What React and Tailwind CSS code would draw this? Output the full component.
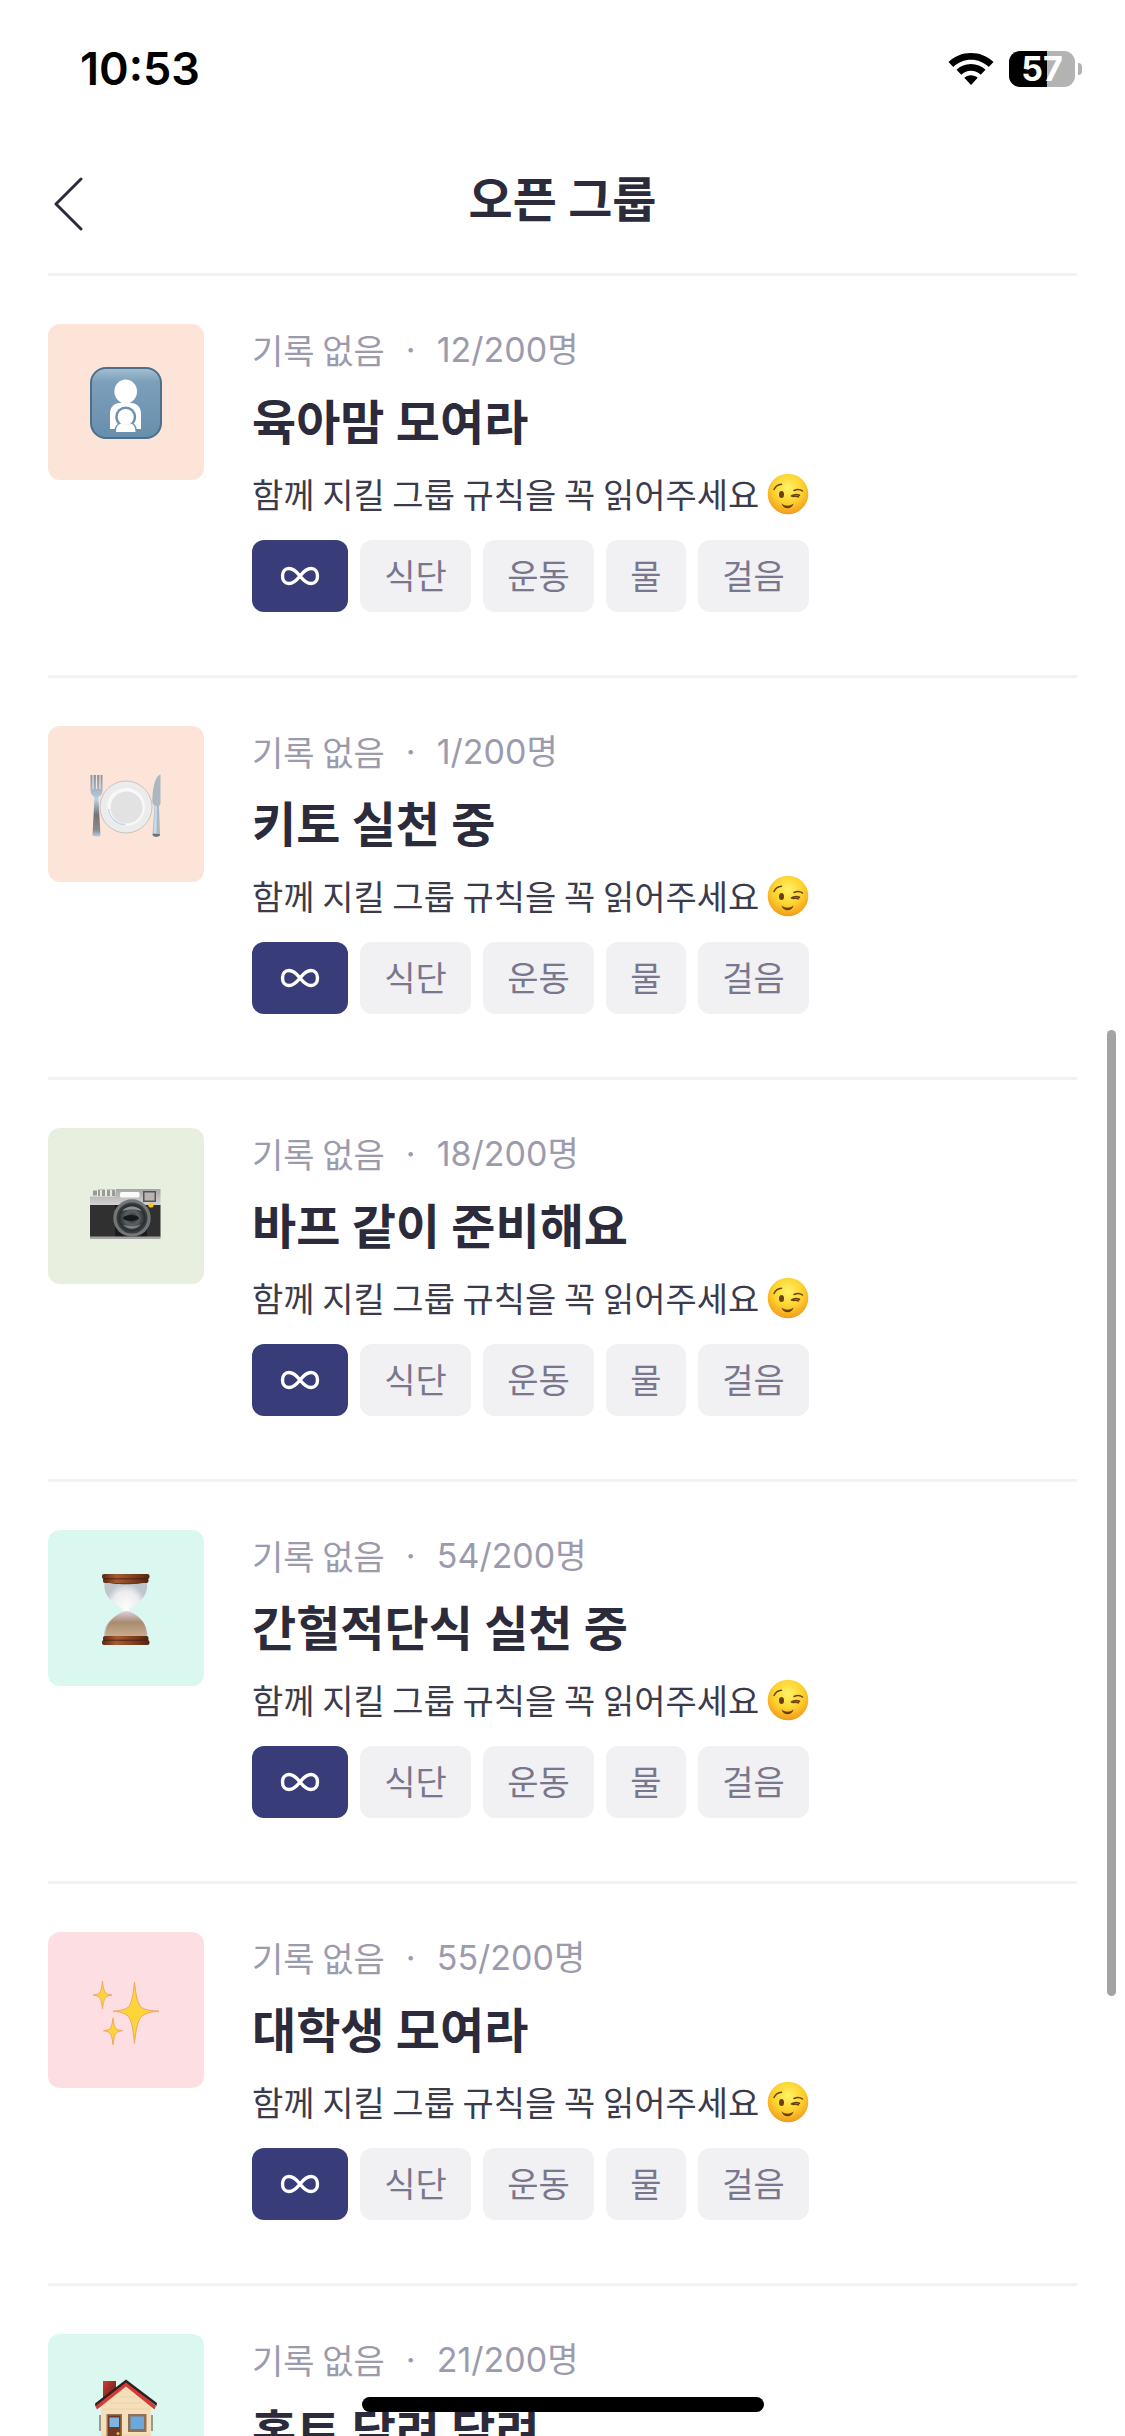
import React from 'react';

// Group artwork, each drawn on a 72x72 board
const NursingIcon = () => (
  <svg viewBox="0 0 72 72" className="w-[72px] h-[72px]" aria-hidden="true">
    <defs>
      <linearGradient id="nursing-bg" x1="0" y1="0" x2="0" y2="1">
        <stop offset="0" stopColor="#a3c0d4" />
        <stop offset="0.2" stopColor="#7d9fba" />
        <stop offset="1" stopColor="#668fad" />
      </linearGradient>
    </defs>
    <rect x="1" y="1" width="70" height="70" rx="15" fill="url(#nursing-bg)" stroke="#4d6f8a" strokeWidth="2" />
    <ellipse cx="35.7" cy="24.5" rx="11.3" ry="12" fill="#fff" />
    <path d="M20 62V47c0-7 4-11 10-11h11c6 0 10 4 10 11v15h-6c-1-3-3-5-5-6H31c-3 1-4 3-5 6z" fill="#fff" />
    <circle cx="35.7" cy="50" r="10.500" fill="#6b92b0" />
    <path d="M24 66c0-6 3-10 7-10h10c4 0 6 4 6 10z" fill="#6b92b0" />
    <circle cx="35.7" cy="50" r="8" fill="#fff" />
    <path d="M26 65c0-5 2-8 5.500-8.500 3 1.500 5.500 1.500 8.500 0 3.500.5 5.500 3.500 5.500 8.500z" fill="#fff" />
  </svg>
);

const PlateIcon = () => (
  <svg viewBox="0 0 72 72" className="w-[72px] h-[72px]" aria-hidden="true">
    <defs>
      <linearGradient id="plate-metal" x1="0" y1="0" x2="0" y2="1">
        <stop offset="0" stopColor="#8d8f94" />
        <stop offset="0.4" stopColor="#b5d0e6" />
        <stop offset="0.65" stopColor="#77726f" />
        <stop offset="0.9" stopColor="#8b8d92" />
        <stop offset="1" stopColor="#b8cfe4" />
      </linearGradient>
    </defs>
    <path d="M0.500 6v15c0 4 2 6 4 7L2.500 66c0 2 8 2 8 0L8.300 28c2.500-1 4.200-3 4.200-7V6" fill="url(#plate-metal)" />
    <path d="M3 6v14M6.500 6v14M10 6v14" stroke="#f4e4da" strokeWidth="1.200" />
    <circle cx="36" cy="38" r="26" fill="#ececec" stroke="#bdb9b7" strokeWidth="0.800" />
    <circle cx="36" cy="38" r="19" fill="#f8f8f8" />
    <circle cx="36.500" cy="38.500" r="16" fill="#e2e2e3" />
    <path d="M18.500 40c1 9 8 15.500 17 15.800" fill="none" stroke="#c5d8e8" strokeWidth="1.500" />
    <path d="M70.500 5.500c-6 2-8.500 16-8 29l2 2L62.500 66c0 2.500 7.500 2.500 7.500 0L69 37l1.500-2z" fill="#aab8c0" />
    <path d="M65 37l-1.500 27h3L67 37z" fill="#c5dbee" />
    <path d="M62.500 65h7.500c.5 3.500-7.500 3.500-7.500 0z" fill="#6f7176" />
  </svg>
);

const CameraIcon = () => (
  <svg viewBox="0 0 72 72" className="w-[72px] h-[72px]" aria-hidden="true">
    <defs>
      <linearGradient id="camera-top" x1="0" y1="0" x2="0" y2="1">
        <stop offset="0" stopColor="#a5a5a5" />
        <stop offset="1" stopColor="#d6d6d6" />
      </linearGradient>
      <radialGradient id="camera-lens">
        <stop offset="0" stopColor="#222" />
        <stop offset="0.5" stopColor="#5b6063" />
        <stop offset="1" stopColor="#24282a" />
      </radialGradient>
    </defs>
    <path d="M3 19.500h4v5H3zM8 18.500h7v6.500H8zM17 18.500h8v6.500h-8z" fill="#999b99" />
    <path d="M10 19h2v6h-2zM20 19h2v6h-2z" fill="#e6e6e6" />
    <path d="M0 25.500h25l1-7.500h44.500v17H0z" fill="url(#camera-top)" />
    <rect x="0" y="34" width="70.500" height="32" fill="#303030" />
    <rect x="25" y="34" width="32" height="32" fill="#1b1b1b" />
    <rect x="0" y="65.500" width="70.500" height="2.500" fill="#a5a5a5" />
    <rect x="30" y="21" width="19.500" height="5.500" rx="1.500" fill="#fafafa" />
    <rect x="53" y="20" width="13" height="11" fill="#555" />
    <rect x="54.500" y="21.500" width="10" height="8" fill="#b9b4b2" />
    <circle cx="42" cy="47" r="18.700" fill="#737577" />
    <circle cx="42" cy="47" r="15.500" fill="#3a3d3f" />
    <circle cx="42" cy="47" r="13.500" fill="url(#camera-lens)" />
    <path d="M32 40c5-6 15-6 20 0-6-2-14-2-20 0z" fill="#8c9294" />
    <path d="M33 54c5 5 13 5 18-.5-6 2-12 2-18 .5z" fill="#7d8385" />
    <ellipse cx="41" cy="47" rx="8" ry="3" fill="#16191a" />
    <circle cx="61" cy="34" r="2.600" fill="#fcc419" />
  </svg>
);

const HourglassIcon = () => (
  <svg viewBox="0 0 72 72" className="w-[72px] h-[72px]" aria-hidden="true">
    <defs>
      <linearGradient id="hourglass-wood" x1="0" y1="0" x2="1" y2="0">
        <stop offset="0" stopColor="#5a2a14" />
        <stop offset="0.3" stopColor="#a75a32" />
        <stop offset="0.7" stopColor="#7d3c1e" />
        <stop offset="1" stopColor="#54240f" />
      </linearGradient>
      <radialGradient id="hourglass-glass">
        <stop offset="0" stopColor="#ffffff" />
        <stop offset="0.7" stopColor="#ecebee" />
        <stop offset="1" stopColor="#bfc5cc" />
      </radialGradient>
      <linearGradient id="hourglass-sand" x1="0" y1="0" x2="0" y2="1">
        <stop offset="0" stopColor="#ddd3dc" />
        <stop offset="0.45" stopColor="#a98a70" />
        <stop offset="1" stopColor="#c9ad8e" />
      </linearGradient>
    </defs>
    <path d="M14.500 10h42.500c1.500 13-8 20-18 26v2c10 4 19 13 18.500 26H14C13.500 51 23 42 33 38v-2c-10-6-20-13-18.500-26z" fill="url(#hourglass-glass)" />
    <path d="M32 39c3-1.500 6-1.500 9 0 10 5 16 12 15.500 24.500h-41C15 51 22 44 32 39z" fill="url(#hourglass-sand)" />
    <path d="M16 9h40c-4 3-36 3-40 0z" fill="#4a4348" />
    <rect x="12" y="1" width="47.500" height="5" rx="2" fill="url(#hourglass-wood)" />
    <rect x="13" y="5" width="45.500" height="5" rx="2" fill="url(#hourglass-wood)" />
    <rect x="13" y="63" width="45.500" height="5" rx="2" fill="url(#hourglass-wood)" />
    <rect x="12" y="67" width="47.500" height="5" rx="2" fill="url(#hourglass-wood)" />
    <path d="M13 5.800h45M13 67.200h45" stroke="#401b0a" strokeWidth="0.800" />
  </svg>
);

const SparklesIcon = () => (
  <svg viewBox="0 0 72 72" className="w-[72px] h-[72px]" aria-hidden="true">
    <g fill="#fcd53a" stroke="#f0a85c" strokeWidth="1" strokeLinejoin="round">
      <path d="M44.500 7c1.500 14 3 22 7 25.500 4 2.500 10 3.200 17.500 3.700-8 .5-13 2-17 4.800-4 4-6 12-7.500 27.500-1.500-15.500-3-23.500-6.500-27.500-4-3-8-4.300-15-4.800 7-.5 11-1.200 15-3.700 3.500-3.500 5-11.500 6.500-25.500z" />
      <path d="M12.500 6c.8 8 2 11.500 3.500 12.500s3.500 1.200 6 1.500c-2.500.4-4.500.9-6 2-1.500 1.200-2.700 5-3.500 12-.8-7-2-10.800-3.500-12-1.500-1.100-3.500-1.600-6-2 2.500-.3 4.500-.5 6-1.500S11.700 14 12.500 6z" />
      <path d="M23 43c.8 7 2 10 3.500 11s3.500 1.400 6 1.700c-2.500.4-4.500.9-6 2-1.500 1.200-2.700 5-3.500 12-.8-7-2-10.800-3.500-12-1.500-1.100-3.500-1.600-6-2 2.500-.3 4.500-.7 6-1.700s2.700-4 3.500-11z" />
    </g>
  </svg>
);

const HouseIcon = () => (
  <svg viewBox="0 0 72 72" className="w-[72px] h-[72px]" aria-hidden="true">
    <defs>
      <linearGradient id="house-chimney" x1="0" y1="0" x2="1" y2="1">
        <stop offset="0" stopColor="#cf3d35" />
        <stop offset="1" stopColor="#5a1512" />
      </linearGradient>
    </defs>
    <path d="M13 4h13v20H13z" fill="url(#house-chimney)" />
    <path d="M9 38h3v16H9zM60 38h3v16h-3z" fill="#9a9a8c" />
    <path d="M36 7l25 22v43H11V29z" fill="#f5dfbb" />
    <path d="M26 20h20M20 26h32M12 32h48M12 58h48M12 64h48" stroke="#e8cda2" strokeWidth="0.800" />
    <path d="M36 4l30 25-1.500 3.500L36 9.500 7 32.500 5 28.500z" fill="#d63a36" />
    <path d="M36 2.500L67 26l-.5 3L36 5.500 5.500 29 5 26.500z" fill="#2b2022" />
    <rect x="16.500" y="37" width="15.500" height="35" fill="#96724f" />
    <rect x="18" y="38.500" width="12.500" height="34" fill="#6f3a25" />
    <rect x="19.500" y="40.500" width="9.500" height="9.500" fill="#7fb4e3" />
    <circle cx="28" cy="56.500" r="1.500" fill="#f0b93a" />
    <rect x="38" y="37" width="18.500" height="18" fill="#8f6f55" />
    <rect x="40.500" y="39.500" width="13.500" height="12.500" fill="#69a7dd" />
    <path d="M8 70h56v2H8z" fill="#5a8f3d" />
  </svg>
);

const WinkIcon = () => (
  <svg viewBox="0 0 42 42" className="w-[42px] h-[42px] shrink-0" role="img" aria-label="윙크">
    <defs>
      <radialGradient id="wink-face" cx="0.5" cy="0.35" r="0.65">
        <stop offset="0" stopColor="#fff266" />
        <stop offset="0.55" stopColor="#fdd32f" />
        <stop offset="1" stopColor="#f39a1c" />
      </radialGradient>
    </defs>
    <circle cx="21" cy="21" r="20.300" fill="url(#wink-face)" />
    <ellipse cx="14.500" cy="21.500" rx="2.500" ry="3.600" fill="#68400d" />
    <g fill="none" stroke="#68400d" strokeLinecap="round">
      <path d="M7 16.500c1.500-3 4-5 7.500-5.200" strokeWidth="1.500" />
      <path d="M27 17.500c3-1.500 6-1.500 8.500.5" strokeWidth="1.500" />
      <path d="M24.500 23c2-1.500 5-2 8-.8M26 23.500c2-.3 4-.2 5.500.2" strokeWidth="1.600" />
    </g>
    <path d="M14.500 30.500c4 3 8 3 12 0-1 6-10.500 6.500-12 0z" fill="#68400d" />
  </svg>
);

const InfinityIcon = () => (
  <svg viewBox="0 0 40 20" className="w-10 h-5" fill="none" stroke="#fff" strokeWidth="3.400" role="img" aria-label="무제한">
    <path d="M20 10c-3.500-4.500-6.500-7.500-11-7.500C5 2.500 2.500 5.500 2.500 10S5 17.500 9 17.500c4.500 0 7.500-3 11-7.500s6.500-7.500 11-7.500c4 0 6.500 3 6.500 7.500S35 17.500 31 17.500c-4.500 0-7.500-3-11-7.500z" />
  </svg>
);

const groups = [
  { id: 1, name: '육아맘 모여라', members: '12/200', color: 'bg-[#fce4d8]', icon: NursingIcon },
  { id: 2, name: '키토 실천 중', members: '1/200', color: 'bg-[#fce4d8]', icon: PlateIcon },
  { id: 3, name: '바프 같이 준비해요', members: '18/200', color: 'bg-[#e9efde]', icon: CameraIcon },
  { id: 4, name: '간헐적단식 실천 중', members: '54/200', color: 'bg-[#daf8ef]', icon: HourglassIcon },
  { id: 5, name: '대학생 모여라', members: '55/200', color: 'bg-[#fddfe3]', icon: SparklesIcon },
  { id: 6, name: '홈트 달려 달려', members: '21/200', color: 'bg-[#daf8ef]', icon: HouseIcon },
];

const tags = [
  { label: '식단', width: 'w-[111px]' },
  { label: '운동', width: 'w-[111px]' },
  { label: '물', width: 'w-20' },
  { label: '걸음', width: 'w-[111px]' },
];

const StatusBar = () => (
  <div className="h-[138px] shrink-0 flex items-center justify-between pl-20 pr-[43px] text-black">
    <span className="text-[45px] leading-[48px] font-semibold">10:53</span>
    <div className="flex items-center gap-[15px]">
      <svg viewBox="0 0 46 34" className="w-[46px] h-[34px]" aria-label="Wi-Fi" role="img">
        <path d="M23 1c8.800 0 16.800 3.400 22.500 9l-4.800 5C36 10.500 29.800 7.800 23 7.800S10 10.500 5.300 15L.5 10C6.200 4.400 14.200 1 23 1z" />
        <path d="M23 12c5.600 0 10.700 2.200 14.500 5.800l-4.800 5C30 20.300 26.700 18.800 23 18.800s-7 1.500-9.700 4l-4.800-5C12.300 14.200 17.400 12 23 12z" />
        <path d="M23 23.200c2.600 0 5 .9 6.700 2.500L23 33l-6.700-7.300c1.700-1.600 4.100-2.500 6.700-2.500z" />
      </svg>
      <div className="flex items-center gap-[3px]">
        <div className="w-[66px] h-9 rounded-[11px] flex items-center justify-center bg-linear-to-r from-black from-57% to-[#b3b3b3] to-57% text-white text-[34px] leading-9 font-bold">
          57
        </div>
        <div className="w-1 h-3 rounded-r-full bg-[#b3b3b3]" />
      </div>
    </div>
  </div>
);

const GroupRow = ({ group }) => (
  <li className="flex gap-12 border-t-3 border-[#f2f2f3] pt-12 pb-[63px]">
    <div className={`w-[156px] h-[156px] pt-0.5 shrink-0 rounded-xl flex items-center justify-center ${group.color}`}>
      <group.icon />
    </div>
    <div className="min-w-0">
      <p className="flex items-center h-[52px] text-[34px] leading-[52px] text-[#9c9bad]">
        <span className="font-['Noto_Sans_CJK_KR',sans-serif]">기록 없음</span>
        <span className="w-[52px] text-center">·</span>
        <span>{group.members}명</span>
      </p>
      <h2 className="mt-[11px] text-[48px] leading-[72px] font-bold text-[#2c2b3b]">{group.name}</h2>
      <p className="mt-[11px] flex items-center gap-2 text-[34px] leading-[48px] text-[#3c3b4c] font-['Noto_Sans_CJK_KR',sans-serif]">
        함께 지킬 그룹 규칙을 꼭 읽어주세요
        <WinkIcon />
      </p>
      <ul className="mt-[22px] flex gap-3">
        <li className="w-24 h-[72px] rounded-xl bg-[#383c78] flex items-center justify-center">
          <InfinityIcon />
        </li>
        {tags.map(tag => (
          <li
            key={tag.label}
            className={`h-[72px] rounded-xl bg-[#f1f1f3] text-center text-[34px] leading-[74px] text-[#79778e] ${tag.width}`}
          >
            {tag.label}
          </li>
        ))}
      </ul>
    </div>
  </li>
);

export default function App() {
  return (
    <div className="relative h-screen overflow-hidden flex flex-col bg-white font-['Inter','Noto_Sans_CJK_KR',sans-serif]">
      <StatusBar />

      {/* Header */}
      <header className="h-[135px] shrink-0 grid grid-cols-[1fr_auto_1fr] items-center px-12 pb-[3px]">
        <button type="button" aria-label="뒤로" className="justify-self-start p-[3px]">
          <svg viewBox="0 0 36 54" className="w-9 h-[54px]" fill="none" stroke="#2c2b3b" strokeWidth="3" strokeLinecap="round" strokeLinejoin="round">
            <path d="M30 2L5 27l25 25" />
          </svg>
        </button>
        <h1 className="pb-2 text-[48px] leading-[72px] font-bold text-[#2c2b3b]">오픈 그룹</h1>
      </header>

      {/* Group list */}
      <main className="flex-1 min-h-0 overflow-y-auto [scrollbar-width:none] px-12">
        <ul>
          {groups.map(group => (
            <GroupRow key={group.id} group={group} />
          ))}
        </ul>
      </main>

      {/* Scroll thumb and home indicator float above the list */}
      <div className="absolute right-[9px] top-[1030px] w-[9px] h-[966px] rounded-full bg-[#a3a3a3]" />
      <div className="absolute bottom-6 left-1/2 -translate-x-1/2 w-[402px] h-[15px] rounded-full bg-black" />
    </div>
  );
}
